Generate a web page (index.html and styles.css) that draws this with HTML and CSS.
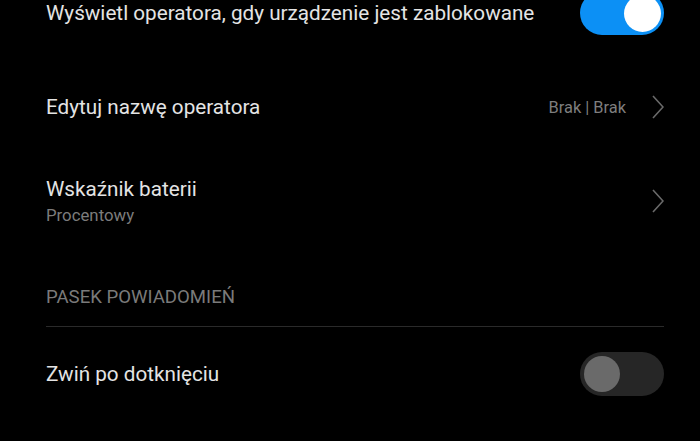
FILE: index.html
```html
<!DOCTYPE html>
<html lang="pl">
<head>
  <meta charset="UTF-8">
  <meta name="viewport" content="width=device-width, initial-scale=1.0">
  <title>Pasek stanu</title>
  <link rel="stylesheet" href="styles.css">
</head>
<body>
  <div class="settings">
    <!-- przełącznik operatora na ekranie blokady -->
    <div class="row">
      <div class="label">
        <div class="title">Wyświetl operatora, gdy urządzenie jest zablokowane</div>
      </div>
      <div class="switch on"><span class="knob"></span></div>
    </div>

    <div class="row">
      <div class="label">
        <div class="title">Edytuj nazwę operatora</div>
      </div>
      <div class="value">Brak | Brak</div>
      <svg class="chevron" viewBox="0 0 12 24"><path d="M1 1 L11 12 L1 23"/></svg>
    </div>

    <div class="row">
      <div class="label">
        <div class="title">Wskaźnik baterii</div>
        <div class="summary">Procentowy</div>
      </div>
      <svg class="chevron" viewBox="0 0 12 24"><path d="M1 1 L11 12 L1 23"/></svg>
    </div>

    <div class="section">PASEK POWIADOMIEŃ</div>

    <div class="row">
      <div class="label">
        <div class="title">Zwiń po dotknięciu</div>
      </div>
      <div class="switch"><span class="knob"></span></div>
    </div>
  </div>
</body>
</html>
```

FILE: styles.css
```css
body {
  margin: 0;
  background-color: #000;
  font-family: Roboto, "Liberation Sans", sans-serif;
  overflow: hidden;
}

.settings {
  margin-top: -34px;
  padding: 0 36px 0 46px;
}

.row {
  display: flex;
  align-items: center;
  height: 94px;
}

.label {
  flex: 1;
}

.title {
  font-size: 20.7px;
  line-height: 26px;
  color: #e4e4e4;
}

.summary {
  margin-top: 2px;
  font-size: 16.8px;
  line-height: 22px;
  color: #7c7c7c;
}

.value {
  font-size: 16.4px;
  color: #7e7e7e;
  margin-right: 26px;
}

.chevron {
  width: 12px;
  height: 24px;
  fill: none;
  stroke: #6a6a6a;
  stroke-width: 1.6;
}

.section {
  padding: 39px 0 18px;
  font-size: 18.6px;
  line-height: 21px;
  color: #7a7a7a;
  border-bottom: 1px solid #2a2a2a;
}

.switch {
  display: flex;
  align-items: center;
  box-sizing: border-box;
  width: 84px;
  height: 44px;
  padding: 0 4px;
  border-radius: 22px;
  background-color: #262626;
}

.switch .knob {
  width: 36px;
  height: 36px;
  border-radius: 50%;
  background-color: #6a6a6a;
}

.switch.on {
  justify-content: flex-end;
  padding: 0 3px;
  background-color: #0c90f5;
}

.switch.on .knob {
  width: 37px;
  height: 37px;
  background-color: #fff;
}
```
